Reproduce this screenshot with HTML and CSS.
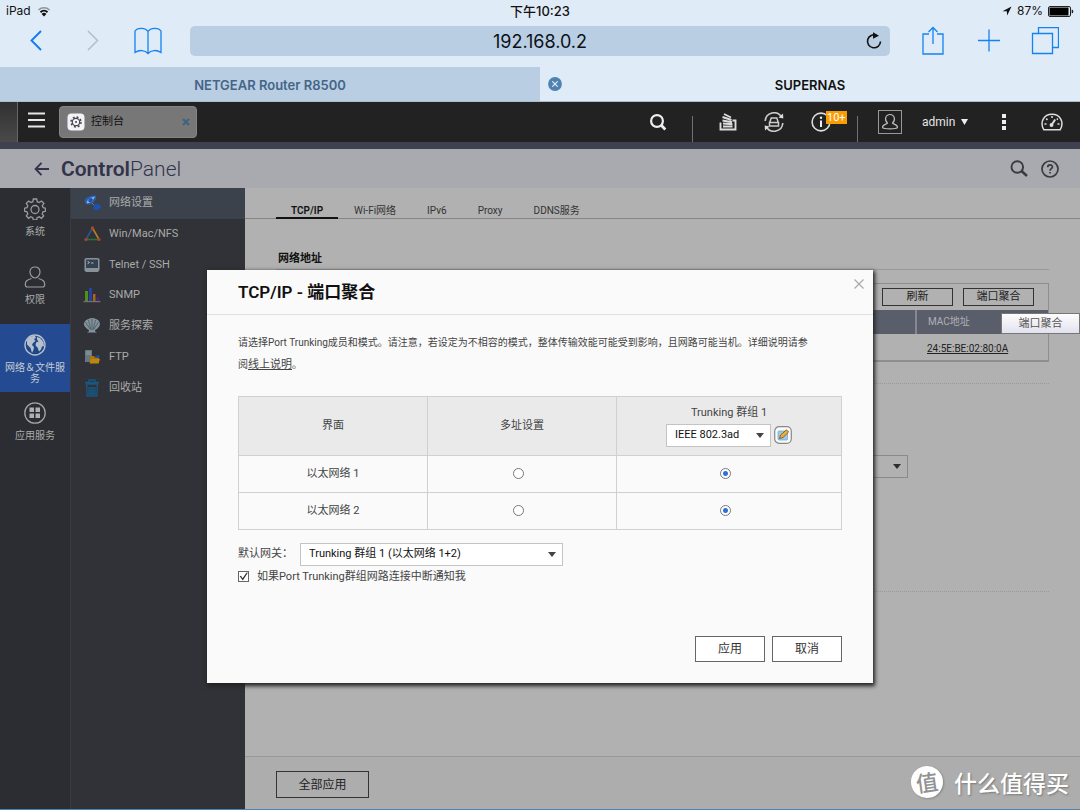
FILE: index.html
```html
<!DOCTYPE html>
<html lang="zh-CN">
<head>
<meta charset="utf-8">
<meta name="viewport" content="width=device-width, initial-scale=1">
<title>SUPERNAS</title>
<link rel="stylesheet" href="styles.css">
</head>
<body>
<header class="browser">
  <div class="status">
    <div class="status-side">
      <span>iPad</span>
      <svg width="14" height="11" viewBox="0 0 14 11" fill="none"><path d="M1.500 4a8 8 0 0 1 11 0" stroke="#8b949c" stroke-width="1.500"/><path d="M3.500 6.200a5 5 0 0 1 7 0" stroke="#111" stroke-width="1.900"/><path d="M7 10.500 4.600 8a3.400 3.400 0 0 1 4.800 0Z" fill="#111"/></svg>
    </div>
    <time class="clock">下午10:23</time>
    <div class="status-side status-end">
      <svg width="10" height="10" viewBox="0 0 10 10"><path d="M.5 5.200 9.500.5 5.200 9.500 4.800 5.300Z" fill="#111"/></svg>
      <span>87%</span>
      <svg class="battery" width="26" height="11" viewBox="0 0 26 11"><rect x=".5" y=".5" width="22" height="10" rx="1.500" fill="none" stroke="#222"/><rect x="1.500" y="1.500" width="19" height="8" fill="#000"/><path d="M23.700 3.500q1.600 0 1.600 2t-1.600 2Z" fill="#222"/></svg>
    </div>
  </div>
  <div class="toolbar">
    <div class="tool-group tool-left">
      <button class="tool" aria-label="后退"><svg width="28" height="28" viewBox="0 0 28 28" fill="none" stroke="#0f7cf5" stroke-width="1.900"><path d="m19 4-9.500 9.500L19 23"/></svg></button>
      <button class="tool" aria-label="前进"><svg width="28" height="28" viewBox="0 0 28 28" fill="none" stroke="#b3bec6" stroke-width="1.500"><path d="m10 4 9.500 9.500L10 23"/></svg></button>
      <button class="tool" aria-label="书签"><svg width="28" height="28" viewBox="0 0 28 28" fill="none" stroke="#1482f5" stroke-width="1.300"><path d="M14 4.500C11.500.5 3.500.3 1 4v21.500c4-2.800 10-2.800 13 1C17 22.700 23 22.700 27 25.500V4C24.500.3 16.500.5 14 4.500v22"/></svg></button>
    </div>
    <div class="address">
      <input class="url" type="text" value="192.168.0.2" aria-label="网址">
      <button class="reload" aria-label="重新载入"><svg width="18" height="18" viewBox="0 0 18 18"><path d="M11.500 3.300A6.500 6.500 0 1 0 15.500 9.500" fill="none" stroke="#111" stroke-width="1.600"/><path d="m8 .3 6 3.400-6 3Z" fill="#111"/></svg></button>
    </div>
    <div class="tool-group tool-right">
      <button class="tool" aria-label="共享"><svg width="28" height="30" viewBox="0 0 28 30" fill="none" stroke="#1482f5" stroke-width="1.300"><path d="M10 8H4v20h20V8h-6M14 18V1.500M9.500 6 14 1.500 18.500 6"/></svg></button>
      <button class="tool" aria-label="新标签页"><svg width="28" height="28" viewBox="0 0 28 28" fill="none" stroke="#1482f5" stroke-width="1.300"><path d="M14 2.500v22M3 13.500h22"/></svg></button>
      <button class="tool" aria-label="标签页"><svg width="28" height="28" viewBox="0 0 28 28" fill="none" stroke="#1482f5" stroke-width="1.300"><path d="M1.500 6.500h20v20h-20ZM7.500 6.500v-6h20v20h-6"/></svg></button>
    </div>
  </div>
  <nav class="tabs">
    <a class="tab" href="#router">NETGEAR Router R8500</a>
    <a class="tab tab-current" href="#nas">SUPERNAS</a>
    <button class="tab-close" aria-label="关闭标签页"><svg width="14" height="14" viewBox="0 0 14 14"><circle cx="7" cy="7" r="6.900" fill="#4f82b1"/><path d="m4.300 4.300 5.400 5.400m0-5.400-5.400 5.400" stroke="#e3eef8" stroke-width="1.200"/></svg></button>
  </nav>
</header>

<div class="taskbar">
  <span class="desktop-edge"></span>
  <button class="menu" aria-label="主菜单"><svg width="18" height="16" viewBox="0 0 18 16" stroke="#e6e6e6" stroke-width="2"><path d="M0 1.500h17M0 8h17M0 14.500h17"/></svg></button>
  <div class="task">
    <svg width="18" height="18" viewBox="0 0 18 18"><rect x=".5" y=".5" width="17" height="17" rx="4" fill="#f3f3f7"/><circle cx="9" cy="9" r="3.700" fill="none" stroke="#454552" stroke-width="1.200"/><circle cx="9" cy="9" r="5" fill="none" stroke="#454552" stroke-width="1.500" stroke-dasharray="1.960 1.960"/><circle cx="9" cy="9" r="1" fill="#454552"/></svg>
    <span class="task-name">控制台</span>
    <button class="task-close" aria-label="关闭"><svg width="8" height="8" viewBox="0 0 8 8"><path d="m1 1 6 6m0-6L1 7" stroke="#42627e" stroke-width="2.200"/></svg></button>
  </div>
  <div class="tray">
    <button class="tray-item w28" aria-label="搜索"><svg width="18" height="18" viewBox="0 0 18 18" fill="none" stroke="#eee" stroke-width="2.200"><circle cx="8" cy="8" r="5.900"/><path d="m12 12 4.300 4.500" stroke-width="2.800"/></svg></button>
    <span class="divider"></span>
    <button class="tray-item w30" aria-label="后台任务"><svg width="20" height="20" viewBox="0 0 20 20" fill="none" stroke="#ddd" stroke-width="1.900"><path d="M2.500 10.500v7h15v-9h-3M5 14.500h9.500M5 11.500l9.500.8M4.500 8.500l9.500 1.800M4.500 5l9 3M6 2l7 3.500"/></svg></button>
    <button class="tray-item w22" aria-label="外接设备"><svg width="22" height="20" viewBox="0 0 22 20" fill="none" stroke="#ccc" stroke-width="1.600"><path d="M2.200 9A8.800 8.800 0 0 1 18.500 5M19.800 11A8.800 8.800 0 0 1 3.500 15"/><path d="m20 1.500.3 5-4.800-1ZM2 18.500l-.3-5 4.800 1Z" fill="#ddd" stroke="none"/><path d="M8.200 6h5.600l1.500 4.500H6.700ZM6.500 10.500h9v3.500h-9Z" stroke-width="1.500"/></svg></button>
    <button class="tray-item w32 notice" aria-label="事件通知"><svg width="20" height="20" viewBox="0 0 20 20"><circle cx="10" cy="10" r="8.900" fill="none" stroke="#ddd" stroke-width="1.600"/><path d="M10 8.500v6.500" stroke="#eee" stroke-width="2"/><circle cx="10" cy="5.700" r="1.200" fill="#eee"/></svg><span class="badge">10+</span></button>
    <span class="divider"></span>
    <span class="avatar"><svg width="18" height="20" viewBox="0 0 18 20" fill="none" stroke="#bbb" stroke-width="1.200"><path d="M6.500 11C3 8 4.500 2.500 9 2.500S15 8 11.500 11c.3 1.300 4.800 1.200 5 4.200.2 2.300-15.200 2.300-15 0 .2-3 4.700-2.900 5-4.200Z"/></svg></span>
    <button class="tray-item user">admin <svg width="7" height="6" viewBox="0 0 7 6"><path d="M0 0h7L3.500 6Z" fill="#eee"/></svg></button>
    <button class="tray-item w32" aria-label="更多"><svg width="4" height="16" viewBox="0 0 4 16" fill="#eee"><path d="M0 0h4v4H0ZM0 6h4v4H0ZM0 12h4v4H0Z"/></svg></button>
    <button class="tray-item w24" aria-label="仪表板"><svg width="22" height="18" viewBox="0 0 22 18" fill="none" stroke="#ddd" stroke-width="1.500"><path d="M2.800 16.700C-1.500 9 2.800 1.300 11 1.300S23.500 9 19.200 16.700Z"/><path d="M3.500 11h2M16.500 11h2M5.200 5.600l1.300 1.300M11 3v2M16.800 5.600l-1 1"/><path d="m10.500 12 3.700-5.500" stroke-width="2"/><circle cx="10.500" cy="12" r="1.200" fill="#ddd"/></svg></button>
  </div>
</div>

<div class="app">
  <header class="app-head">
    <button class="back" aria-label="返回"><svg width="16" height="14" viewBox="0 0 16 14" fill="none" stroke="#33334b" stroke-width="1.900"><path d="M15 7H2M7.500.8 1.600 7l5.900 6.200"/></svg></button>
    <h1 class="app-title"><b>Control</b>Panel</h1>
    <button class="head-icon" aria-label="搜索"><svg width="18" height="18" viewBox="0 0 18 18" fill="none" stroke="#3a3b42" stroke-width="1.900"><circle cx="7.300" cy="7" r="5.800"/><path d="m11.500 11 5.500 5" stroke-width="2.500"/></svg></button>
    <button class="head-icon" aria-label="帮助"><svg width="18" height="18" viewBox="0 0 18 18" fill="none" stroke="#3a3b42" stroke-width="1.700"><circle cx="9" cy="9" r="8"/><path d="M6.700 7.300C6.700 4 11.500 4.200 11.400 7 11.400 8.600 9 8.700 9 10.700M9 12v1.600"/></svg></button>
  </header>

  <div class="workspace">
    <nav class="rail">
      <a class="rail-item" href="#system"><svg width="22" height="22" viewBox="0 0 22 22" fill="none" stroke="#9c9c9f" stroke-width="1.300"><path d="m9.300 1 3.400 0 .5 2.700 2 .9 2.300-1.600 2.400 2.400-1.600 2.300.9 2 2.300.5v3l-2.500.6-.8 2 1.500 2.200-2.300 2.300-2.200-1.500-2.100.9-.4 2.300H9.300l-.5-2.400-2-.9-2.200 1.600L2.300 18l1.500-2.200-.8-2-2.500-.6v-3L3 9.700l.8-2-1.500-2.300 2.400-2.400 2.200 1.500 2-.8Z"/><circle cx="11" cy="11.500" r="4"/></svg><span>系统</span></a>
      <a class="rail-item" href="#privilege"><svg width="22" height="22" viewBox="0 0 22 22" fill="none" stroke="#9c9c9f" stroke-width="1.200"><path d="M11 1C7.500 1 6 3.500 6 6s2 6 5 6 5-3.500 5-6-1.500-5-5-5ZM7.500 12.500C3 14 1.300 15 1.300 18.500c0 1.500.7 2.500 2.200 2.500h15c1.500 0 2.200-1 2.200-2.500 0-3.500-1.700-4.500-6.200-6"/></svg><span>权限</span></a>
      <a class="rail-item rail-on" href="#network"><svg width="22" height="22" viewBox="0 0 22 22"><circle cx="11" cy="11" r="10" fill="#1f4684" stroke="#b5bfce" stroke-width="1.400"/><path d="M3 6C5 2.500 8 1.500 11 2l1 2-2 1 1.500 2L9 9l-1 2 2 2-.5 3L8 19l-1.500-5L3 10.500ZM13 3l3 1 3.500 4 .5 4-2 .5-1 3-2 2-1.500-4-2-2 .5-3 2.500-1-1.500-2Z" fill="#b5bfce"/></svg><span>网络＆文件服务</span></a>
      <a class="rail-item" href="#apps"><svg width="22" height="22" viewBox="0 0 22 22"><circle cx="11" cy="11" r="10.200" fill="none" stroke="#a4a4a6" stroke-width="1.300"/><path d="M5.500 5.500H10V10H5.500ZM11.500 5.500H16V10h-4.500ZM5.500 11.500H10V16H5.500ZM11.500 11.500H16V16h-4.500Z" fill="#b0b0b2"/></svg><span>应用服务</span></a>
    </nav>

    <nav class="side">
      <a class="side-item side-on" href="#net"><svg width="18" height="18" viewBox="0 0 18 18"><path d="M1.500 6Q5 1 13 1.500q1 5-5 8.500-6 2-6.500-4Z" fill="#2560b5"/><path d="M12 2.500Q9.500 8.500 3.500 9.500 4 4 12 2.500Z" fill="#9fb6cc"/><ellipse cx="7.500" cy="6" rx="2.500" ry="1.700" transform="rotate(-35 7.500 6)" fill="#1b53a8"/><path d="m9 9 4 4" stroke="#778292"/><ellipse cx="14" cy="13" rx="3.700" ry="3" transform="rotate(-20 14 13)" fill="#1a53b4"/></svg><span>网络设置</span></a>
      <a class="side-item" href="#share"><svg width="18" height="18" viewBox="0 0 18 18" fill="none" stroke-width="1.600"><path d="M9.500 3 3 14.500" stroke="#28568d"/><path d="M9.500 3 16 14.500" stroke="#b18022"/><path d="M3 14.500h13" stroke="#26713a"/><g fill="#b6402a"><circle cx="9.500" cy="3" r="1.700"/><circle cx="3" cy="14.500" r="1.600"/><circle cx="16" cy="14.500" r="1.600"/></g></svg><span>Win/Mac/NFS</span></a>
      <a class="side-item" href="#telnet"><svg width="18" height="18" viewBox="0 0 18 18"><path d="M3 2h12l1.500 1v11L15 16H3l-1.500-1.500V3Z" fill="#89929b"/><path d="M3 3.500h12V12H3Z" fill="#354050"/><path d="m4.500 5.200 2 1.300-2 1.300M8 7h2.500" stroke="#acb8c0" fill="none"/></svg><span>Telnet / SSH</span></a>
      <a class="side-item" href="#snmp"><svg width="18" height="18" viewBox="0 0 18 18"><path d="M2 5h3v10H2Z" fill="#519014"/><path d="M6 2h3v13H6Z" fill="#2943a5"/><path d="M10 8h2.500v7H10Z" fill="#a66b13"/><path d="M13.500 11H16v4h-2.500Z" fill="#552083"/><path d="M.5 15h17v1.200H.5Z" fill="#707279"/></svg><span>SNMP</span></a>
      <a class="side-item" href="#discovery"><svg width="18" height="18" viewBox="0 0 18 18"><path d="M.8 7q.8-4 4.700-5Q9-.2 13 2q3.500 1 4 5-.8 4-5 6v1.200l2 1.300H4l2-1.300V13Q2 11 .8 7Z" fill="#84939b"/><path d="M9 2v11M5.500 3 8 13M2.500 5 7 12M12.500 3 10 13M15.500 5 11 12" stroke="#46565f" stroke-width=".8"/></svg><span>服务探索</span></a>
      <a class="side-item" href="#ftp"><svg width="18" height="18" viewBox="0 0 18 18"><path d="M2 2h7v12H2Z" fill="#667782"/><path d="M3 4h5M3 6h5" stroke="#94a1a8"/><path d="M7 8h4l1 1.500h4V15H7Z" fill="#af7604"/><path d="m12 8 4-1 .5 3h-4Z" fill="#214f9e"/><path d="M8 11h9l-1.500 4.500H6.500Z" fill="#bd8611"/></svg><span>FTP</span></a>
      <a class="side-item" href="#recycle"><svg width="18" height="18" viewBox="0 0 18 18" fill="none" stroke="#195781" stroke-width="1.400"><path d="M2 3.500h14M6 3V1h6v2M3.500 5h11l-.7 12H4.200Z"/><path d="M6 9h6v6H6Z" fill="#195781"/><path d="M6 10.500h6M6 13h6" stroke="#243743" stroke-width=".6"/></svg><span>回收站</span></a>
    </nav>

    <main class="main">
      <nav class="subtabs">
        <a class="subtab subtab-on" href="#tcpip">TCP/IP</a>
        <a class="subtab" href="#wifi">Wi-Fi网络</a>
        <a class="subtab" href="#ipv6">IPv6</a>
        <a class="subtab" href="#proxy">Proxy</a>
        <a class="subtab" href="#ddns">DDNS服务</a>
      </nav>
      <div class="content">
        <h2 class="section-title">网络地址</h2>
        <section class="adapters">
          <div class="adapter-tools">
            <button class="small-btn">刷新</button>
            <button class="small-btn">端口聚合</button>
          </div>
          <table class="adapter-table">
            <tr><th></th><th class="mac">MAC地址</th></tr>
            <tr><td></td><td class="mac"><a href="#mac">24:5E:BE:02:80:0A</a></td></tr>
          </table>
          <span class="tooltip">端口聚合</span>
        </section>
        <section class="gateway-area">
          <span class="select gateway-select">
            <select aria-label="系统默认网关"><option></option></select>
            <svg width="8" height="5" viewBox="0 0 8 5"><path d="M0 0h8L4 5Z" fill="#2d2d2d"/></svg>
          </span>
        </section>
      </div>
      <footer class="main-foot"><button class="apply-all">全部应用</button></footer>
    </main>
  </div>

  <div class="overlay">
    <section class="dialog" role="dialog" aria-labelledby="dialog-title">
      <header class="dialog-head">
        <h2 class="dialog-title" id="dialog-title">TCP/IP - 端口聚合</h2>
        <button class="dialog-close" aria-label="关闭"><svg width="12" height="12" viewBox="0 0 12 12"><path d="m1.500 1.500 9 9m0-9-9 9" stroke="#aaa" stroke-width="1.300"/></svg></button>
      </header>
      <form class="dialog-body">
        <p class="intro">请选择Port Trunking成员和模式。请注意，若设定为不相容的模式，整体传输效能可能受到影响，且网路可能当机。详细说明请参<br>阅<a class="help-link" href="#help">线上说明</a>。</p>
        <table class="ports">
          <thead>
            <tr>
              <th class="col-a">界面</th>
              <th class="col-a">多址设置</th>
              <th>
                <label for="mode">Trunking 群组 1</label>
                <div class="mode-row">
                  <span class="select mode-select">
                    <select id="mode"><option>IEEE 802.3ad</option></select>
                    <svg width="8" height="5" viewBox="0 0 8 5"><path d="M0 0h8L4 5Z" fill="#444"/></svg>
                  </span>
                  <button class="edit" type="button" aria-label="编辑"><svg width="18" height="18" viewBox="0 0 18 18"><rect x=".7" y=".7" width="16.600" height="16.600" rx="4.500" fill="#fafafa" stroke="#888" stroke-width="1.200"/><rect x="4" y="5" width="9.500" height="9" rx="1" fill="#9bcbe6" stroke="#6ba3c3" stroke-width=".7"/><path d="m5.500 12.500 1-3.500 6-5.200 2.200 2.200-5.700 5.500Z" fill="#f2ab3c" stroke="#6b4c22" stroke-width=".8"/></svg></button>
                </div>
              </th>
            </tr>
          </thead>
          <tbody>
            <tr><td>以太网络 1</td><td><input class="radio" type="radio" name="eth1" aria-label="以太网络 1 多址设置"></td><td><input class="radio" type="radio" name="eth1" checked aria-label="以太网络 1 Trunking 群组 1"></td></tr>
            <tr><td>以太网络 2</td><td><input class="radio" type="radio" name="eth2" aria-label="以太网络 2 多址设置"></td><td><input class="radio" type="radio" name="eth2" checked aria-label="以太网络 2 Trunking 群组 1"></td></tr>
          </tbody>
        </table>
        <div class="field">
          <label class="field-label" for="gateway">默认网关：</label>
          <span class="select field-select">
            <select id="gateway"><option>Trunking 群组 1 (以太网络 1+2)</option></select>
            <svg width="8" height="5" viewBox="0 0 8 5"><path d="M0 0h8L4 5Z" fill="#444"/></svg>
          </span>
        </div>
        <label class="notify"><input class="check" type="checkbox" checked><span>如果Port Trunking群组网路连接中断通知我</span></label>
        <div class="actions">
          <button class="btn" type="button">应用</button>
          <button class="btn" type="button">取消</button>
        </div>
      </form>
    </section>
  </div>

  <div class="watermark"><span class="mark">值</span><span>什么值得买</span></div>
</div>
</body>
</html>
```

FILE: styles.css
```css
* { box-sizing: border-box; }
body {
  margin: 0;
  min-height: 100vh;
  display: flex;
  flex-direction: column;
  font: 11px/16px Roboto, "Noto Sans CJK SC", sans-serif;
  color: #444;
  background: #b1b1b1;
}
button {
  padding: 0;
  border: 0;
  background: none;
  font: inherit;
  color: inherit;
}
a { color: inherit; text-decoration: none; }
svg { display: block; flex: none; }
h1, h2, p { margin: 0; }

/* Browser chrome */
.browser {
  background: #dfebf7;
  color: #111;
  font-family: Inter, "Noto Sans CJK SC", sans-serif;
  border-bottom: 1px solid #aebdca;
}
.status {
  display: flex;
  align-items: center;
  height: 22px;
  padding: 0 6px;
  font-size: 12px;
}
.status-side { flex: 1; display: flex; align-items: center; gap: 6px; }
.status-end { justify-content: flex-end; gap: 5px; }
.clock { font-size: 13px; font-weight: 500; }
.toolbar {
  display: flex;
  align-items: center;
  height: 45px;
  padding-bottom: 7px;
}
.tool-group { flex: 0 0 190px; display: flex; }
.tool-left { padding-left: 22px; gap: 28px; }
.tool-right { padding-left: 29px; gap: 28px; }
.tool { display: grid; place-items: center; width: 28px; height: 30px; }
.address {
  flex: 1;
  display: grid;
  align-items: center;
  height: 30px;
  border-radius: 5px;
  background: #b9cee3;
}
.address > * { grid-area: 1 / 1; }
.url {
  width: 100%;
  height: 30px;
  border: 0;
  background: none;
  color: #0c1116;
  font: 18px/24px Inter, sans-serif;
  text-align: center;
}
.reload { justify-self: end; margin-right: 7px; }
.tabs { display: grid; grid-template-columns: 1fr 1fr; height: 34px; }
.tab {
  grid-row: 1;
  display: grid;
  place-items: center;
  padding-top: 1px;
  background: #b9cee3;
  color: #446587;
  font-size: 13px;
  font-weight: 600;
}
.tab-current { grid-column: 2; background: none; color: #111; }
.tab-close { grid-area: 1 / 2; justify-self: start; align-self: center; margin-left: 8px; }

/* NAS task bar */
.taskbar {
  display: flex;
  align-items: center;
  height: 40px;
  padding-right: 16px;
  background: #222;
}
.desktop-edge {
  width: 18px;
  height: 40px;
  background: linear-gradient(#303030, #4a4a4a);
  border-right: 1px solid #666;
}
.menu { margin: 0 13px 4px 10px; }
.task {
  display: flex;
  align-items: center;
  gap: 6px;
  width: 138px;
  height: 32px;
  padding: 0 6px 0 7px;
  border-radius: 4px;
  background: #777;
  border: 1px solid #858585;
  color: #111;
}
.task-name { flex: 1; }
.tray {
  flex: 1;
  display: flex;
  justify-content: flex-end;
  align-items: center;
  gap: 20px;
  color: #e5e5e5;
}
.tray-item { display: grid; place-items: center; height: 40px; }
.w22 { width: 22px; }
.w24 { width: 24px; }
.w28 { width: 28px; }
.w30 { width: 30px; }
.w32 { width: 32px; }
.divider { align-self: flex-end; width: 1px; height: 26px; background: #706f7c; }
.notice { position: relative; }
.badge {
  position: absolute;
  top: 9px;
  left: 21px;
  padding: 0 1px;
  background: #f99d05;
  color: #fff;
  font-size: 11px;
  line-height: 13px;
}
.avatar {
  display: grid;
  place-items: center;
  width: 24px;
  height: 24px;
  border: 1px solid #999;
}
.user { display: flex; align-items: center; justify-content: space-between; width: 46px; font-size: 12px; gap: 6px; }

/* Control panel */
.app {
  position: relative;
  flex: 1;
  display: flex;
  flex-direction: column;
  border-top: 7px solid #3f4050;
  border-bottom: 1px solid #4d83ae;
}
.app-head {
  display: flex;
  align-items: center;
  gap: 13px;
  height: 39px;
  padding: 0 21px 0 34px;
  background: #a9aab0;
}
.app-title { flex: 1; color: #33334b; font-size: 21px; line-height: 28px; font-weight: 300; }
.app-title b { font-weight: 600; }
.back { margin-right: -2px; }
.workspace {
  flex: 1;
  display: flex;
  background: linear-gradient(to right, #313237 245px, #b1b1b1 245px);
}
.rail { flex: 0 0 71px; background: #2c2d32; border-right: 1px solid #3b3c42; }
.rail-item {
  display: flex;
  flex-direction: column;
  align-items: center;
  gap: 6px;
  height: 68px;
  padding: 10px 4px 0;
  color: #aaa;
  font-size: 10px;
  line-height: 11px;
  text-align: center;
}
.rail-on { background: #244b91; color: #c5cbd7; }
.side {
  flex: 0 0 174px;
  display: grid;
  grid-auto-rows: 1fr;
  height: 215px;
}
.side-item {
  display: flex;
  align-items: center;
  gap: 8px;
  padding-left: 12px;
  color: #aaa;
}
.side-on { background: #3b424c; }
.main { flex: 1; display: flex; flex-direction: column; }
.subtabs {
  display: flex;
  gap: 1px;
  height: 31px;
  padding: 0 31px;
  border-bottom: 1px solid #858585;
  font-size: 10px;
}
.subtab { height: 31px; padding: 15px 15px 0; color: #333; }
.subtab-on { border-bottom: 2px solid #111; color: #111; font-weight: 600; }
.content { flex: 1; padding: 32px 31px 0; }
.section-title {
  padding: 0 2px 2px;
  border-bottom: 1px solid #999;
  color: #111;
  font-size: 11px;
  line-height: 16px;
}
.adapters {
  position: relative;
  margin-top: 13px;
  border: 1px solid #8e8e8e;
  border-bottom-width: 2px;
}
.adapter-tools {
  display: flex;
  justify-content: flex-end;
  gap: 10px;
  padding: 4px 14px 4px 0;
}
.small-btn { width: 71px; height: 18px; border: 1px solid #333; color: #222; line-height: 16px; }
.adapter-table { width: 100%; border-collapse: collapse; text-align: left; font-size: 10px; }
.adapter-table th { height: 24px; padding: 0; background: #595e6a; color: #aeb0b5; font-weight: 400; }
.adapter-table td { height: 26px; padding: 3px 0 0; color: #222; }
.adapter-table .mac { width: 132px; padding-left: 11px; }
.adapter-table th.mac { border-left: 2px solid #858891; }
.adapter-table a { text-decoration: underline; }
.tooltip {
  position: absolute;
  top: 29px;
  right: -32px;
  width: 79px;
  border: 1px solid #777;
  background: linear-gradient(#fdfdfd, #e2e2ef);
  color: #555;
  line-height: 19px;
  text-align: center;
}
.gateway-area {
  display: grid;
  justify-content: end;
  margin-top: 21px;
  padding: 71px 141px 113px 0;
  border: dotted #9b9b9b;
  border-width: 1px 0;
}
.main-foot { padding: 14px 31px 11px; background: #adadad; border-top: 1px solid #989898; }
.apply-all { width: 93px; height: 27px; border: 1px solid #333; font-size: 12px; color: #222; }

/* Drop-down lists */
.select { display: grid; align-items: center; }
.select > * { grid-area: 1 / 1; }
.select svg { justify-self: end; margin-right: 7px; pointer-events: none; }
.select select {
  appearance: none;
  width: 100%;
  height: 23px;
  margin: 0;
  padding: 0 8px;
  border: 1px solid #c4c4c4;
  border-radius: 0;
  background: #fff;
  color: #111;
  font: 11px/16px Roboto, "Noto Sans CJK SC", sans-serif;
}
.gateway-select { width: 232px; }
.gateway-select select { background: #b1b1b1; border-color: #8a8a8a; }

/* Port trunking dialog */
.overlay { position: absolute; inset: 0 0 6px; display: grid; place-items: center; }
.dialog {
  width: 666px;
  max-width: 100%;
  background: #fafafa;
  box-shadow: 1px 2px 4px 1px #222;
}
.dialog-head {
  display: flex;
  justify-content: space-between;
  height: 45px;
  padding: 0 8px 0 31px;
  border-bottom: 1px solid #e2e2e2;
}
.dialog-title { color: #111; font-size: 17px; line-height: 45px; font-weight: 600; }
.dialog-close { align-self: flex-start; margin-top: 8px; }
.dialog-body { padding: 17px 31px 21px; }
.intro { font-size: 10px; line-height: 22px; margin-bottom: 20px; }
.help-link { text-decoration: underline; font-size: 11px; }
.ports { width: 100%; border-collapse: collapse; table-layout: fixed; text-align: center; }
.ports th, .ports td { height: 37px; padding: 0; border: 1px solid #d0d0d0; font-weight: 400; }
.ports th { height: 59px; background: #eaeaea; }
.ports .col-a { width: 189px; }
.mode-row { display: flex; justify-content: center; align-items: center; gap: 3px; margin-top: 3px; }
.mode-select { width: 105px; text-align: left; }
.ports td:has(.radio) { padding-right: 8px; }
.radio {
  appearance: none;
  display: block;
  width: 11px;
  height: 11px;
  margin: 0 auto;
  border: 1px solid #777;
  border-radius: 50%;
  background: #fff;
}
.radio:checked { background: radial-gradient(circle, #2d6fdb 2px, #fff 3px); }
.field { display: flex; align-items: center; margin-top: 13px; }
.field-label { width: 62px; }
.field-select { width: 263px; }
.notify { display: flex; align-items: center; gap: 8px; margin-top: 3px; }
.check {
  appearance: none;
  display: grid;
  place-items: center;
  width: 11px;
  height: 11px;
  margin: 0;
  border: 1px solid #666;
  background: #fff;
}
.check:checked::before {
  content: "";
  width: 9px;
  height: 9px;
  background: #333;
  clip-path: polygon(8% 48%, 22% 42%, 40% 70%, 85% 5%, 98% 8%, 42% 95%);
}
.actions { display: flex; justify-content: flex-end; gap: 7px; margin-top: 51px; }
.btn { width: 70px; height: 26px; border: 1px solid #666; background: #fff; color: #333; font-size: 12px; }

.watermark {
  position: absolute;
  right: 11px;
  bottom: 10px;
  display: flex;
  align-items: center;
  gap: 11px;
  color: #fff;
  font: 500 23px/34px "Noto Sans CJK SC", sans-serif;
  text-shadow: 1px 1px 2px #777;
}
.mark {
  width: 32px;
  height: 32px;
  border-radius: 50%;
  background: #fff;
  color: #929292;
  font-size: 22px;
  line-height: 30px;
  text-align: center;
  text-shadow: none;
  box-shadow: 1px 1px 2px #888;
  transform: rotate(-8deg);
}
```
